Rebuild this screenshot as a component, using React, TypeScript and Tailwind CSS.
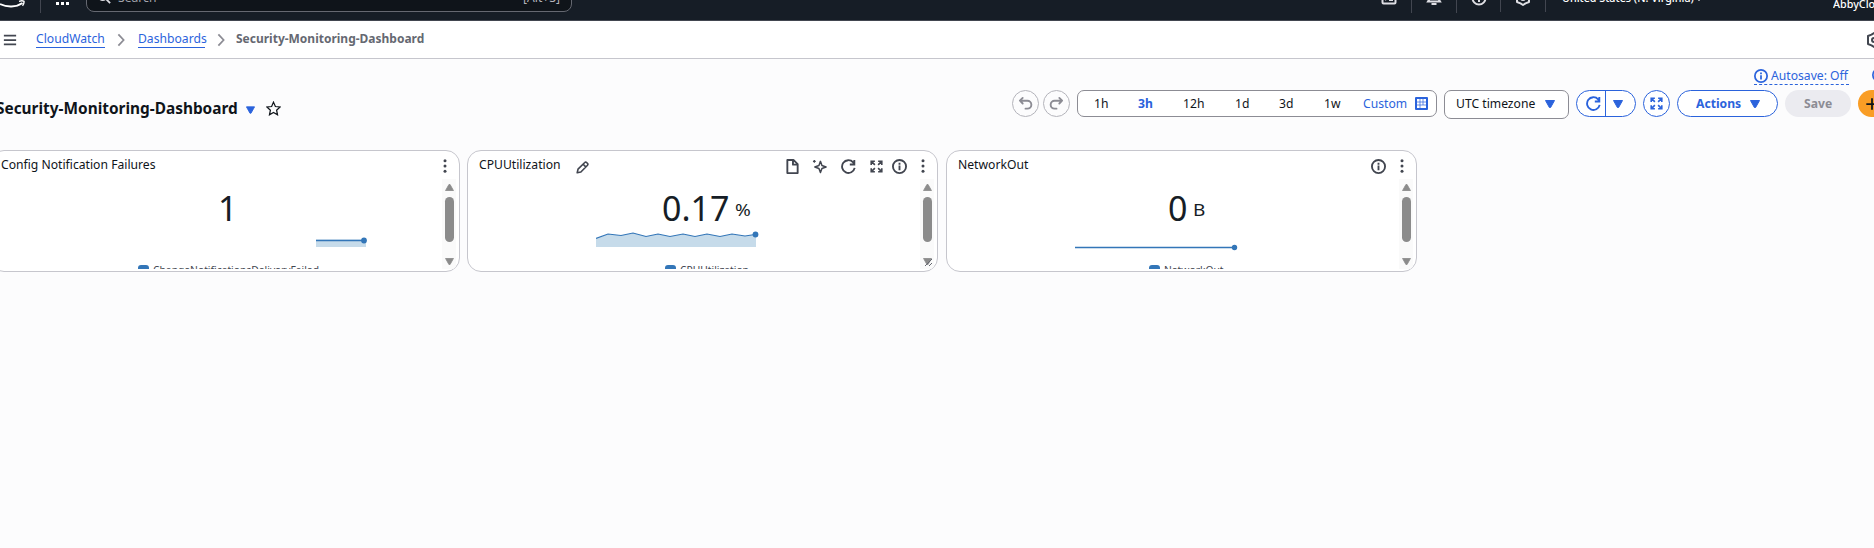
import React from "react";
import { clsx } from "clsx";

type IconProps = { d: React.ReactNode; className?: string; w?: number };

function Icon({ d, className, w = 2 }: IconProps) {
  return (
    <svg viewBox="0 0 16 16" fill="none" stroke="currentColor" strokeWidth={w} className={clsx("shrink-0", className)}>
      {d}
    </svg>
  );
}

const undo = <path d="M5 2 2 5l3 3M2.2 5H10a4 4 0 0 1 0 8.500H8" strokeLinejoin="round" strokeLinecap="round" />;
const redo = <path d="m11 2 3 3-3 3M13.800 5H6a4 4 0 0 0 0 8.500h2" strokeLinejoin="round" strokeLinecap="round" />;
const refresh = <path d="M14.200 1v4.800h-4.800M14.600 9.500A6.800 6.800 0 1 1 13 3.500L14.200 5.500" />;
const expand = (
  <path d="M10 1.500h4.500V6M6 14.500H1.500V10M6 1.500H1.500V6M10 14.500h4.500V10M14 2l-4 4M2 14l4-4M2 2l4 4M14 14l-4-4" />
);
const info = (
  <>
    <circle cx="8" cy="8" r="7" />
    <path d="M8 7v5M8 4v2" />
  </>
);
const file = <path d="M2.500 1H9l4.500 4.500V15h-11zM8.500 1v5h5" strokeLinejoin="round" />;
const sparkle = (
  <>
    <path d="M9 2.500 10.600 7l4.400 1.500-4.400 1.600L9 14.500l-1.600-4.400L3 8.500 7.400 7z" strokeLinejoin="round" />
    <path d="M2.500 1v3M1 2.500h3" strokeWidth="1.300" />
  </>
);
const pencil = (
  <path d="m1.500 14.500 1-4.500L10.800 1.800a1.500 1.500 0 0 1 2.200 0l1.200 1.200a1.500 1.500 0 0 1 0 2.200L6 13.500zM8.800 4l3.200 3.200" strokeLinejoin="round" />
);
const star = <path d="m8 1.200 2 4.700 5 .5-3.700 3.400 1 4.900L8 12.200l-4.300 2.500 1-4.900L1 6.400l5-.5z" />;
const gear = (
  <>
    <path d="M8 1l2.500 1.600L14 4v8l-3.500 1.400L8 15l-2.500-1.600L2 12V4l3.500-1.400z" strokeLinejoin="round" />
    <circle cx="8" cy="8" r="2" />
  </>
);

/* Narrowed label: the outer box holds the label's final width. */
function T({ children, className }: { children: React.ReactNode; className?: string }) {
  return (
    <span className={clsx("block shrink-0", className)}>
      <span className="inline-block origin-left scale-x-[0.935] whitespace-nowrap">{children}</span>
    </span>
  );
}

function Caret({ className }: { className?: string }) {
  return (
    <svg viewBox="0 0 10 8" className={clsx("shrink-0", className)}>
      <path d="M.5.5h9L5.600 7.500H4.400z" fill="currentColor" stroke="currentColor" strokeLinejoin="round" />
    </svg>
  );
}

function Dots() {
  return (
    <svg viewBox="0 0 4 14" className="h-[14px] w-[4px] shrink-0" fill="currentColor">
      <circle cx="2" cy="1.800" r="1.500" />
      <circle cx="2" cy="7" r="1.500" />
      <circle cx="2" cy="12.200" r="1.500" />
    </svg>
  );
}

function TopBar() {
  return (
    <header className="flex h-[21px] overflow-hidden border-b border-[#424650] bg-[#161d26] text-white">
      <svg viewBox="0 0 26 10" className="h-[10px] w-[26px] shrink-0" fill="none" stroke="white" strokeWidth="1.800">
        <path d="M0 4C7 7.500 16 7.500 22.500 3" />
        <path d="M19 1.300c2-.6 4-.6 5 0 .2 1.500-.3 3-1.500 4.500" strokeWidth="1.400" />
      </svg>
      <div className="ml-[14px] h-[13px] w-px shrink-0 bg-[#424650]" />
      <div className="ml-[15px] mt-[2px] flex shrink-0 gap-[2px]">
        {[0, 1, 2].map((i) => (
          <span key={i} className="h-[3px] w-[3px] bg-white" />
        ))}
      </div>
      <div className="-mt-[20px] ml-[17px] flex h-[32px] w-[486px] shrink-0 items-center rounded-[8px] border border-[#656871] bg-[#0f141a] px-[10px] text-[13px] text-[#a4a4ad]">
        <Icon d={<><circle cx="6.500" cy="6.500" r="5" /><path d="m10 10 5 5" /></>} className="mt-[2px] h-[14px] w-[14px] text-[#dedee3]" />
        <T className="ml-[7px] mt-[3px] w-[39px]">Search</T>
        <T className="ml-auto mt-[3px] w-[38px] text-[#b4b4bb]">[Alt+S]</T>
      </div>
      <div className="ml-[809px] flex shrink-0">
        <Icon d={<><rect x="1.500" y="1.500" width="13" height="13" rx="1" /><path d="m4 5 3 3-3 3M8 11h4" /></>} className="-mt-[11px] h-[16px] w-[16px] text-[#dedee3]" />
        <div className="ml-[14px] h-[13px] w-px bg-[#424650]" />
        <Icon d={<path d="M2 11.500h12L12.500 9V6a4.500 4.500 0 0 0-9 0v3zM5.500 14h5" />} className="-mt-[10px] ml-[14px] h-[16px] w-[16px] text-[#dedee3]" />
        <div className="ml-[14px] h-[13px] w-px bg-[#424650]" />
        <Icon d={<><circle cx="8" cy="8" r="6.500" /><path d="M8 10v2" /></>} className="-mt-[10px] ml-[14px] h-[16px] w-[16px] text-[#dedee3]" />
        <div className="ml-[13px] h-[12px] w-px bg-[#424650]" />
        <Icon d={gear} className="-mt-[10px] ml-[14px] h-[16px] w-[16px] text-[#dedee3]" />
        <div className="ml-[14px] h-[12px] w-px bg-[#424650]" />
      </div>
      <div className="-mt-[12px] ml-[16px] flex shrink-0 text-[11.500px] font-medium leading-[20px]">
        <T className="w-[133px]">United States (N. Virginia)</T>
        <Caret className="mt-[6px] h-[7px] w-[8px]" />
      </div>
      <div className="-mt-[6px] ml-auto w-[41px] shrink-0 overflow-hidden text-[11.500px] font-medium leading-[20px]">
        <T>AbbyCloud</T>
      </div>
    </header>
  );
}

function Breadcrumbs() {
  const chevron = <Icon d={<path d="m5 1.500 6 6.500-6 6.500" />} className="h-[14px] w-[14px] text-[#8c8c94]" />;
  return (
    <nav className="flex h-[38px] items-center border-b border-[#c6c6cd] bg-white text-[13px]">
      <Icon d={<path d="M1 3h14M1 8h14M1 13h14" />} className="ml-[3px] h-[14px] w-[14px] text-[#424650]" />
      <a className="ml-[19px] mb-px h-[17px] w-[69px] shrink-0 border-b border-[#2b63dc] leading-[15px] text-[#2b63dc]">
        <T>CloudWatch</T>
      </a>
      <span className="ml-[9px]">{chevron}</span>
      <a className="ml-[10px] mb-px h-[17px] w-[67px] shrink-0 border-b border-[#2b63dc] leading-[15px] text-[#2b63dc]">
        <T>Dashboards</T>
      </a>
      <span className="ml-[9px]">{chevron}</span>
      <span className="mb-[2px] ml-[8px] w-[190px] shrink-0 font-bold text-[#656871]">
        <span className="inline-block origin-left scale-x-[0.922] whitespace-nowrap">Security-Monitoring-Dashboard</span>
      </span>
      <Icon d={gear} className="-mr-[8px] ml-auto h-[16px] w-[16px] text-[#424650]" />
    </nav>
  );
}

const ranges = [
  ["1h", "w-[44px]"],
  ["3h", "w-[45px]"],
  ["12h", "w-[52px]"],
  ["1d", "w-[44px]"],
  ["3d", "w-[45px]"],
  ["1w", "w-[39px]"],
];

function Toolbar() {
  return (
    <div className="flex items-start text-[13px]">
      <button className="flex h-[27px] w-[27px] shrink-0 items-center justify-center rounded-full border border-[#b4b4bb] text-[#8c8c94]">
        <Icon d={undo} className="h-[15px] w-[15px]" />
      </button>
      <button className="ml-[4px] flex h-[27px] w-[27px] shrink-0 items-center justify-center rounded-full border border-[#b4b4bb] text-[#8c8c94]">
        <Icon d={redo} className="h-[15px] w-[15px]" />
      </button>
      <div className="ml-[7px] flex h-[27px] w-[360px] shrink-0 items-center rounded-[7px] border border-[#8c8c94] bg-white pl-[16px]">
        {ranges.map(([label, width]) => (
          <T key={label} className={clsx(width, label === "3h" ? "font-bold text-[#2b63dc]" : "text-[#0f141a]")}>
            {label}
          </T>
        ))}
        <T className="ml-auto w-[45px] text-[#2b63dc]">Custom</T>
        <svg viewBox="0 0 13 13" className="ml-[7px] mr-[8px] h-[13px] w-[13px] shrink-0">
          <rect width="13" height="13" rx="1" fill="#2b63dc" />
          <path d="M2 2h9v9H2z" fill="white" />
          <path d="M2 5h9M2 8h9M5 2v9M8 2v6" stroke="#2b63dc" strokeWidth=".7" />
        </svg>
      </div>
      <div className="ml-[7px] flex h-[29px] w-[125px] shrink-0 items-center justify-between rounded-[7px] border border-[#8c8c94] bg-white pb-[2px] pl-[11px] pr-[13px] text-[#0f141a]">
        <T className="w-[80px]">UTC timezone</T>
        <Caret className="mt-[1px] h-[8px] w-[10px] text-[#2b63dc]" />
      </div>
      <div className="ml-[7px] flex h-[27px] w-[60px] shrink-0 items-center rounded-full border border-[#2b63dc] bg-white text-[#2b63dc]">
        <span className="flex h-full w-[29px] items-center justify-center border-r border-[#2b63dc] pl-[4px]">
          <Icon d={refresh} className="h-[15px] w-[15px]" />
        </span>
        <Caret className="ml-[7px] h-[8px] w-[10px]" />
      </div>
      <button className="ml-[7px] flex h-[27px] w-[27px] shrink-0 items-center justify-center rounded-full border border-[#2b63dc] bg-white text-[#2b63dc]">
        <Icon d={expand} className="h-[13px] w-[13px]" />
      </button>
      <button className="ml-[7px] flex h-[27px] w-[101px] shrink-0 items-center rounded-full border border-[#2b63dc] bg-white pl-[18px] text-left font-bold text-[#2b63dc]">
        <T className="w-[44px]">Actions</T>
        <Caret className="ml-auto mr-[17px] h-[8px] w-[10px]" />
      </button>
      <button className="ml-[7px] flex h-[27px] w-[66px] shrink-0 items-center rounded-full bg-[#ebebf0] pl-[19px] text-left font-bold text-[#8c8c94]">
        <T className="w-[28px]">Save</T>
      </button>
      <button className="ml-[7px] flex h-[27px] w-[40px] shrink-0 items-center rounded-full bg-[#f99d25] pl-[7px] text-[#0f141a]">
        <Icon d={<path d="M8 1.500v13M1.500 8h13" />} className="h-[14px] w-[14px]" />
      </button>
    </div>
  );
}

type Widget = {
  title: string;
  titleWidth: string;
  card: string;
  value: string;
  valuePad: string;
  unit?: string;
  legend: string;
  legendPad: string;
  chart: React.ReactNode;
  icons: React.ReactNode;
  hovered?: boolean;
};

const cpuLine = "M0 7.500 12 3 25 4.500 37 2 50 5.500 62 3 74 5.500 87 3 99 5.500 111 3 124 5.500 136 3 149 5 159 3.500";

const widgets: Widget[] = [
  {
    title: "Config Notification Failures",
    titleWidth: "w-[156px]",
    card: "-ml-[10px] w-[470px] pl-[10px]",
    value: "1",
    valuePad: "pl-[217px]",
    legend: "ChangeNotificationsDeliveryFailed",
    legendPad: "pl-[137px]",
    chart: (
      <svg className="ml-[315px] h-[18px] w-[54px]" viewBox="0 0 54 18">
        <rect y="8.500" width="50" height="7.500" fill="#c6dbea" />
        <path d="M0 9.500h48" stroke="#3376b8" strokeWidth="1.400" />
        <circle cx="48" cy="9.500" r="2.900" fill="#3376b8" />
      </svg>
    ),
    icons: null,
  },
  {
    title: "CPUUtilization",
    titleWidth: "w-[83px]",
    card: "ml-[7px] w-[471px] pl-[11px]",
    value: "0.17",
    valuePad: "pl-[183px]",
    unit: "%",
    legend: "CPUUtilization",
    legendPad: "pl-[186px]",
    hovered: true,
    chart: (
      <svg className="ml-[117px] h-[18px] w-[164px]" viewBox="0 0 164 18">
        <path d={cpuLine + "H160V16H0Z"} fill="#c6dbea" />
        <path d={cpuLine} fill="none" stroke="#3376b8" strokeWidth="1.200" />
        <circle cx="159.500" cy="3.500" r="2.900" fill="#3376b8" />
      </svg>
    ),
    icons: (
      <>
        <Icon d={file} className="h-[15px] w-[15px]" />
        <Icon d={sparkle} className="ml-[12px] h-[15px] w-[15px]" w={1.6} />
        <Icon d={refresh} className="ml-[14px] h-[15px] w-[15px]" />
        <Icon d={expand} className="ml-[14px] h-[13px] w-[13px]" />
        <Icon d={info} className="ml-[9px] mt-[1px] h-[15px] w-[15px]" />
      </>
    ),
  },
  {
    title: "NetworkOut",
    titleWidth: "w-[71px]",
    card: "ml-[8px] w-[471px] pl-[11px]",
    value: "0",
    valuePad: "pl-[210px]",
    unit: "B",
    legend: "NetworkOut",
    legendPad: "pl-[191px]",
    chart: (
      <svg className="ml-[117px] h-[18px] w-[164px] overflow-visible" viewBox="0 0 164 18">
        <path d="M0 16.500h160" stroke="#3376b8" strokeWidth="1.500" />
        <circle cx="159.500" cy="16.500" r="2.700" fill="#3376b8" />
      </svg>
    ),
    icons: <Icon d={info} className="mt-[1px] h-[15px] w-[15px]" />,
  },
];

function Scrollbar() {
  return (
    <div className="flex h-[90px] w-[14px] shrink-0 flex-col items-center bg-[#fafafa] text-[#8b8b8b]">
      <Caret className="mt-[5px] h-[7px] w-[9px] rotate-180" />
      <div className="mt-[6px] h-[45px] w-[9px] rounded-full bg-[#8b8b8b]" />
      <Caret className="mt-[16px] h-[7px] w-[9px]" />
    </div>
  );
}

function WidgetCard({ w }: { w: Widget }) {
  return (
    <section className={clsx("relative h-[122px] shrink-0 overflow-hidden rounded-[14px] border border-[#c6c6cd] bg-white", w.card)}>
      <div className="flex h-[26px] items-center pr-[12px] text-[#424650]">
        <h2 className="pb-px text-[13px] leading-[20px] text-[#0f141a]">
          <T className={w.titleWidth}>{w.title}</T>
        </h2>
        {w.hovered && <Icon d={pencil} className="ml-[14px] mt-[6px] h-[13px] w-[13px]" />}
        <div className="ml-auto mt-[4px] flex items-center">
          {w.icons}
          <span className="ml-[14px]">
            <Dots />
          </span>
        </div>
      </div>
      <div className="mt-[2px] flex h-[90px]">
        <div className="min-w-0 flex-1 overflow-hidden">
          <div className={clsx("flex h-[52px] items-center pt-[7px] text-[#161d26]", w.valuePad)}>
            <span className="text-[34px]">{w.value}</span>
            {w.unit && (
              <span className="ml-[6px] mt-[2px] inline-block origin-left scale-x-[1.12] text-[17px]">{w.unit}</span>
            )}
          </div>
          {w.chart}
          <div className={clsx("mt-[14px] flex items-start text-[11px] leading-[14px] text-[#424650]", w.legendPad)}>
            <span className="mr-[4px] mt-[2px] h-[10px] w-[11px] shrink-0 rounded-[3px] bg-[#3376b8]" />
            <T>{w.legend}</T>
          </div>
        </div>
        <Scrollbar />
        <div className="w-[3px]" />
      </div>
      {w.hovered && (
        <svg viewBox="0 0 9 9" className="absolute bottom-[4px] right-[4px] h-[9px] w-[9px]">
          <path d="M1 8 8 1M5 8l3-3" stroke="#656871" />
        </svg>
      )}
    </section>
  );
}

export default function App() {
  return (
    <div className="h-[548px] w-full overflow-hidden bg-[#fcfcfd] font-['Noto_Sans',sans-serif]">
      <TopBar />
      <Breadcrumbs />
      <main>
        <div className="flex h-[91px] justify-between">
          <div className="mt-[39px] flex h-[20px] items-center">
            <h1 className="-ml-[4px] w-[243px] shrink-0 text-[16px] font-bold leading-[24px] text-[#0f141a]">
              <span className="inline-block origin-left scale-x-[0.962] whitespace-nowrap">Security-Monitoring-Dashboard</span>
            </h1>
            <Caret className="ml-[7px] mt-[4px] h-[8px] w-[9px] text-[#2b63dc]" />
            <Icon d={star} className="ml-[11px] h-[15px] w-[15px] text-[#0f141a]" w={1.3} />
          </div>
          <div className="w-[862px] overflow-hidden">
            <div className="mt-[8px] flex h-[19px] justify-end text-[13px] text-[#2b63dc]">
              <span className="mr-[23px] flex h-[18px] w-[95px] shrink-0 items-center justify-between border-b border-dashed border-[#2b63dc]">
                <Icon d={info} className="h-[14px] w-[14px]" />
                <T className="w-[78px]">Autosave: Off</T>
              </span>
              <Icon d={info} className="-mr-[12px] mt-[1px] h-[14px] w-[14px]" />
            </div>
            <div className="mt-[4px]">
              <Toolbar />
            </div>
          </div>
        </div>
        <div className="flex">
          {widgets.map((w) => (
            <WidgetCard key={w.title} w={w} />
          ))}
        </div>
      </main>
    </div>
  );
}
